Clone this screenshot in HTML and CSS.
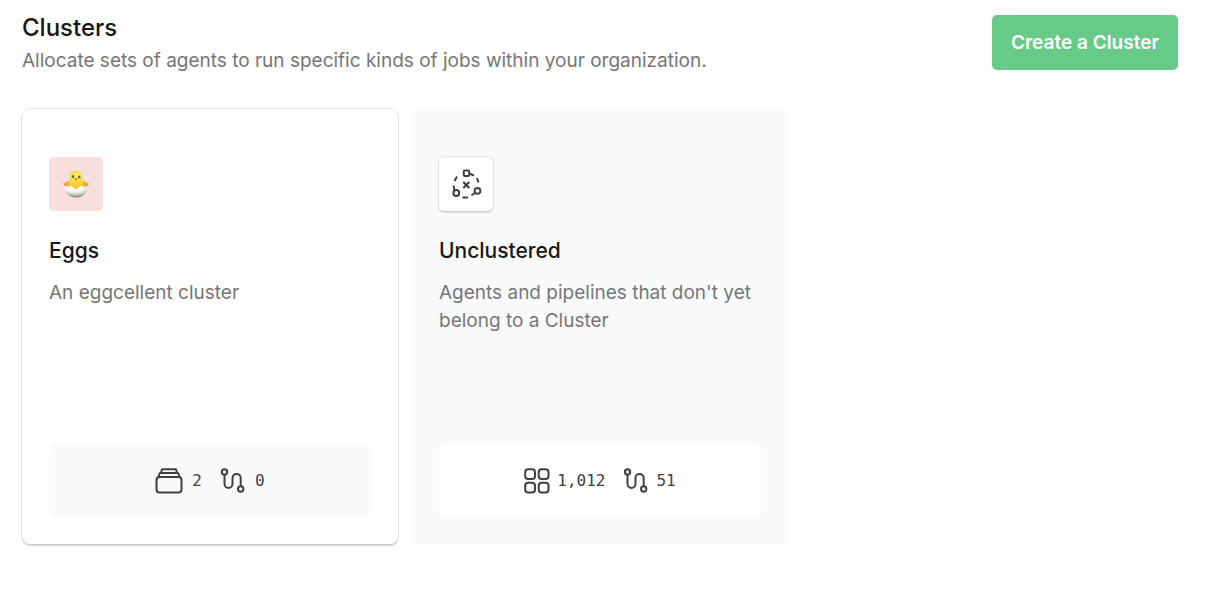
FILE: index.html
```html
<!DOCTYPE html>
<html lang="en">
<head>
<meta charset="utf-8">
<title>Clusters</title>
<link rel="stylesheet" href="styles.css">
</head>
<body>
<main class="page">
  <header class="page-header">
    <div class="page-intro">
      <h1 class="page-title">Clusters</h1>
      <p class="page-text">Allocate sets of agents to run specific kinds of jobs within your organization.</p>
    </div>
    <button class="button" type="button">Create a Cluster</button>
  </header>

  <section class="cluster-grid">
    <article class="card card-raised">
      <div class="badge badge-pink">
        <svg class="emoji" viewBox="0 0 26 28" aria-hidden="true">
          <defs>
            <radialGradient id="shell" cx="45%" cy="15%" r="85%"><stop offset="0.4" stop-color="#fbfaf6"/><stop offset="0.7" stop-color="#d0d1c9"/><stop offset="1" stop-color="#7e8178"/></radialGradient>
            <radialGradient id="chick" cx="50%" cy="30%" r="70%"><stop offset="0" stop-color="#fff05a"/><stop offset="1" stop-color="#f3bf2c"/></radialGradient>
          </defs>
          <path d="M6 18C3 17 0 15.500 .5 12.500L3 13.500 4 11 9 13ZM20 18C23 17 26 15.500 25.500 12.500L23 13.500 22 11 17 13Z" fill="#e9a02b"/>
          <path d="M3.500 19C4 14 6.800 12 6.800 7.500C6.800 3 9 .8 13 .8S19.200 3 19.200 7.500C19.200 12 22 14 22.500 19Z" fill="url(#chick)"/>
          <path d="M1.200 15.500L5 17 8 15.500 10.500 17.500 13 20 15.500 17 18 15.500 21 17 24.800 15.500C25 23 20 27.500 13 27.500S1 23 1.200 15.500Z" fill="url(#shell)"/>
          <ellipse cx="10" cy="6.500" rx="1.300" ry="1.600" fill="#66733e"/>
          <ellipse cx="16.200" cy="7" rx="1.300" ry="1.600" fill="#66733e"/>
          <path d="M11.300 8.700L13 7.700 14.700 8.900 12.800 11Z" fill="#e58324"/>
        </svg>
      </div>
      <h2 class="card-title">Eggs</h2>
      <p class="card-text">An eggcellent cluster</p>
      <div class="stats stats-muted">
        <span class="stat stat-wide">
          <svg class="icon icon-stack" viewBox="0 0 28 26" role="img" aria-label="Queues"><rect x="1.500" y="9" width="25" height="15.500" rx="3"/><path d="M3.500 9L4.500 5.700Q4.800 5 5.600 5H22.400Q23.200 5 23.500 5.700L24.500 9M6 5L6.700 2Q6.900 1.300 7.600 1.300H20.400Q21.100 1.300 21.300 2L22 5"/></svg>
          <span>2</span>
        </span>
        <span class="stat stat-wide">
          <svg class="icon" viewBox="0 0 26 26" role="img" aria-label="Pipelines"><circle cx="4.500" cy="4" r="2.700"/><circle cx="20.700" cy="21" r="2.700"/><path d="M4.500 6.700V15.500C4.500 21.500 12.500 21.500 12.500 15.500V10C12.500 4.500 20.700 4.500 20.700 10V18.300"/></svg>
          <span>0</span>
        </span>
      </div>
    </article>

    <article class="card card-muted">
      <div class="badge badge-white">
        <svg class="icon icon-network" viewBox="0 0 32 32" aria-hidden="true"><rect x="13.800" y="2.500" width="5.400" height="5.400" rx="1"/><circle cx="6.300" cy="25" r="2.900"/><circle cx="27.500" cy="22.800" r="2.900"/><path d="M19.200 5.500L24 7.500M7 8.500L4.500 13M27 10L28.500 14.500M3.700 17.500L4.300 23M12.500 29.500H18M21.500 27.500L25.200 24.500M13.300 14L19.300 20M19.300 14L13.300 20"/></svg>
      </div>
      <h2 class="card-title">Unclustered</h2>
      <p class="card-text">Agents and pipelines that don't yet belong to a Cluster</p>
      <div class="stats stats-white">
        <span class="stat">
          <svg class="icon" viewBox="0 0 26 26" role="img" aria-label="Agents"><rect x="1.200" y="1.200" width="9.800" height="9.800" rx="3"/><rect x="14.700" y="1.200" width="9.800" height="9.800" rx="3"/><rect x="1.200" y="14.700" width="9.800" height="9.800" rx="3"/><rect x="14.700" y="14.700" width="9.800" height="9.800" rx="3"/></svg>
          <span>1,012</span>
        </span>
        <span class="stat">
          <svg class="icon" viewBox="0 0 26 26" role="img" aria-label="Pipelines"><circle cx="4.500" cy="4" r="2.700"/><circle cx="20.700" cy="21" r="2.700"/><path d="M4.500 6.700V15.500C4.500 21.500 12.500 21.500 12.500 15.500V10C12.500 4.500 20.700 4.500 20.700 10V18.300"/></svg>
          <span>51</span>
        </span>
      </div>
    </article>
  </section>
</main>
</body>
</html>
```

FILE: styles.css
```css
* { box-sizing: border-box; }

body {
  margin: 0;
  background: #fff;
  color: #171717;
  font-family: Inter, "Liberation Sans", sans-serif;
}

h1, h2, p { margin: 0; }

.page { padding: 12px 28px 48px 22px; }

.page-header {
  display: flex;
  justify-content: space-between;
  align-items: flex-start;
  gap: 24px;
}

.page-title {
  font-size: 24px;
  font-weight: 500;
  line-height: 32px;
}

.page-text {
  margin-top: 2px;
  color: #767676;
  font-size: 19px;
  line-height: 30px;
}

.button {
  flex: none;
  margin-top: 3px;
  padding: 14px 19px 13px;
  border: 0;
  border-radius: 5px;
  background: #68ca89;
  color: #fff;
  font-family: inherit;
  font-size: 19px;
  font-weight: 600;
  line-height: 28px;
}

.cluster-grid {
  display: grid;
  grid-template-columns: repeat(3, 1fr);
  gap: 14px;
  margin-top: 33px;
}

.card {
  display: flex;
  flex-direction: column;
  min-height: 435px;
  padding: 48px 27px 27px;
  border-radius: 8px;
}

.card-raised {
  box-shadow: 0 0 0 1px rgba(0, 0, 0, 0.08), 0 2px 2px rgba(0, 0, 0, 0.16);
}

.card-muted { background: #f9fafc; }

.badge {
  display: flex;
  align-items: center;
  justify-content: center;
  width: 54px;
  height: 54px;
  border-radius: 5px;
}

.badge-pink { background: #f6dfdd; }

.badge-white {
  background: #fff;
  box-shadow: 0 0 0 1px rgba(0, 0, 0, 0.07), 0 2px 2px rgba(0, 0, 0, 0.12);
}

.emoji { width: 26px; height: 28px; }

.card-title {
  margin-top: 24px;
  font-size: 21px;
  font-weight: 500;
  line-height: 32px;
}

.card-text {
  margin-top: 12px;
  color: #767676;
  font-size: 19px;
  line-height: 28px;
}

.stats {
  display: flex;
  align-items: center;
  justify-content: center;
  gap: 18px;
  height: 73px;
  margin-top: auto;
  border-radius: 7px;
  color: #404040;
  font-family: "DejaVu Sans Mono", monospace;
  font-size: 16px;
  line-height: 24px;
}

.stats-muted { background: #f9fafc; }
.stats-white { background: #fff; }

.stat {
  display: flex;
  align-items: center;
  gap: 7px;
}

.stat-wide { gap: 9px; }

.icon {
  flex: none;
  width: 26px;
  height: 26px;
  fill: none;
  stroke: #404040;
  stroke-width: 2;
}

.icon-stack { width: 28px; }

.icon-network { width: 32px; height: 32px; }
```
